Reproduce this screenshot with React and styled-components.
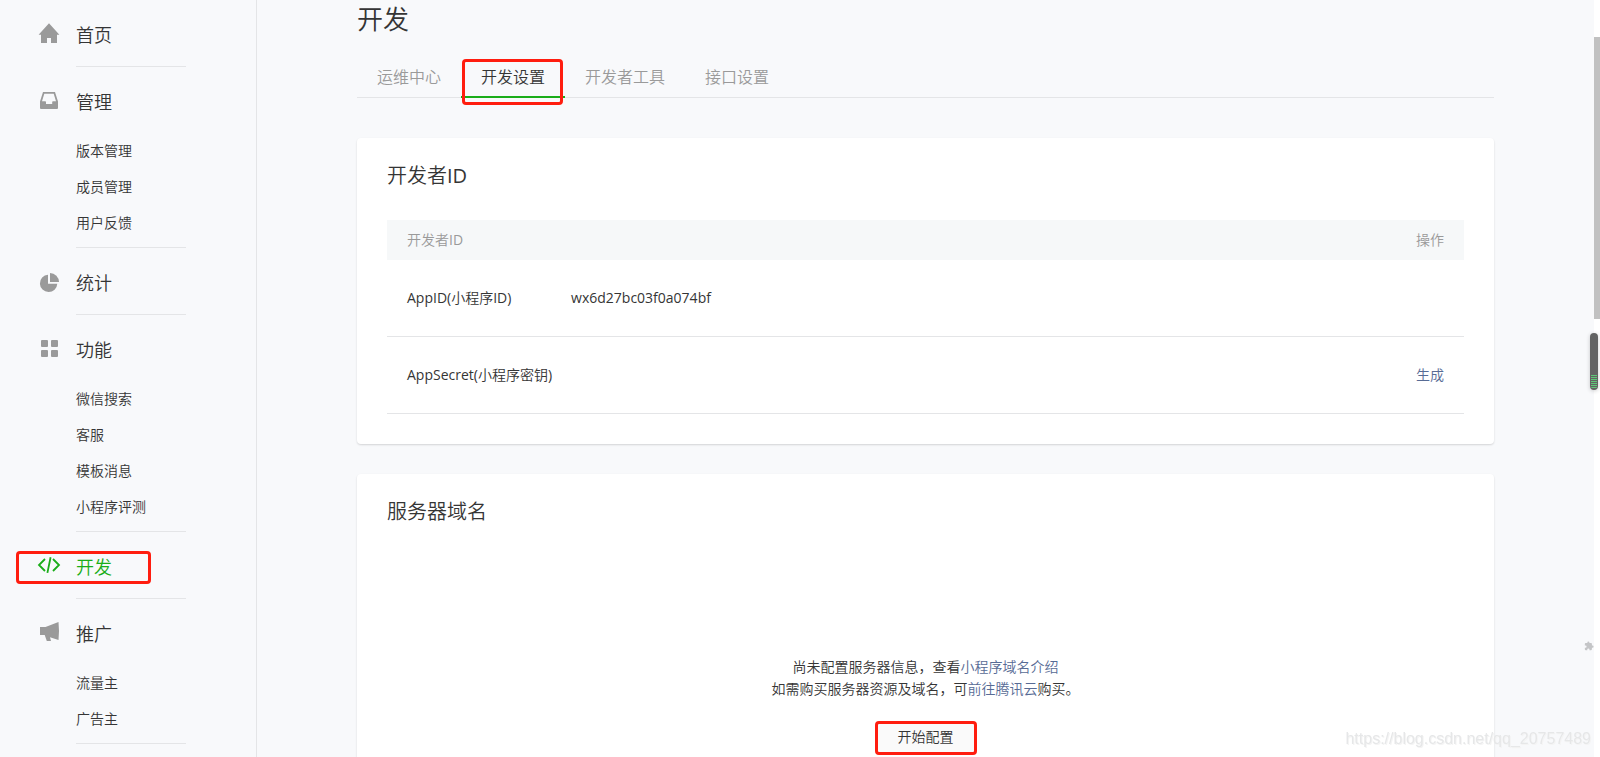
import React, {useState} from 'react';
import styled, {createGlobalStyle} from 'styled-components';

const menus = [
  {name: '首页', icon: 'home', children: []},
  {name: '管理', icon: 'manage', children: ['版本管理', '成员管理', '用户反馈']},
  {name: '统计', icon: 'stats', children: []},
  {name: '功能', icon: 'feature', children: ['微信搜索', '客服', '模板消息', '小程序评测']},
  {name: '开发', icon: 'dev', children: [], active: true},
  {name: '推广', icon: 'promote', children: ['流量主', '广告主']},
]

const tabs = ['运维中心', '开发设置', '开发者工具', '接口设置']

const icons = {
  home: <path d="M12 2.2L1.6 13.8H4V22h6v-5h4v5h6v-8.200h2.400z" />,
  manage: <path fillRule="evenodd" d="M6 4h12l3 9.500V20a1 1 0 0 1-1 1H4a1 1 0 0 1-1-1v-6.500zM7.300 5.800L5 13.300h3.200c.5 0 .8.4.8.8V16h6.200v-1.900c0-.4.3-.8.8-.8h3L16.700 5.800z" />,
  stats: (
    <>
      <path d="M11 5.700V14.800h9.300A8.700 8.700 0 1 1 11 5.700z" />
      <path d="M13 4a9 9 0 0 1 9 9h-9z" />
    </>
  ),
  feature: (
    <>
      <rect x="4" y="4" width="7" height="7" rx="1" />
      <rect x="14" y="4" width="7" height="7" rx="1" />
      <rect x="4" y="14" width="7" height="7" rx="1" />
      <rect x="14" y="14" width="7" height="7" rx="1" />
    </>
  ),
  dev: <path fill="none" stroke="currentColor" strokeWidth="1.8" d="M8 6l-6 6 6 6M16 6l6 6-6 6M13.600 4.300L10.400 19.900" />,
  promote: <path d="M3 7h5.500L21.500 2q1 9 0 18l-8.500-2.700 1 3.700H9.800L7.700 15H3z" />,
}

const App = () => {
  const [current, setCurrent] = useState('开发设置'); //選択中のタブ

  return (
    <>
      <GlobalStyle />
      <Page>
        <Sidebar>
          {menus.map(menu => (
            <Section key={menu.name} $hasChildren={menu.children.length > 0}>
              <MenuHead href="#" $active={menu.active}>
                <MenuIcon viewBox="0 0 24 24" aria-hidden="true">{icons[menu.icon]}</MenuIcon>
                {menu.name}
                {menu.active && <MenuMark />}
              </MenuHead>
              {menu.children.map(child => (
                <SubLink href="#" key={child}>{child}</SubLink>
              ))}
            </Section>
          ))}
        </Sidebar>
        <Main>
          <Title>开发</Title>
          <Tabs>
            {tabs.map(tab => (
              <Tab key={tab} $active={tab === current} onClick={() => setCurrent(tab)}>
                {tab}
                {tab === current && <TabMark />}
              </Tab>
            ))}
          </Tabs>
          <Card>
            <CardTitle>开发者<Latin>ID</Latin></CardTitle>
            <Table>
              <thead>
                <tr>
                  <Th scope="col">开发者<Latin>ID</Latin></Th>
                  <Th />
                  <Th scope="col" $right>操作</Th>
                </tr>
              </thead>
              <tbody>
                <tr>
                  <Td><Latin>AppID(</Latin>小程序<Latin>ID)</Latin></Td>
                  <Td><Latin>wx6d27bc03f0a074bf</Latin></Td>
                  <Td />
                </tr>
                <tr>
                  <Td><Latin>AppSecret(</Latin>小程序密钥<Latin>)</Latin></Td>
                  <Td />
                  <Td $right><Link href="#">生成</Link></Td>
                </tr>
              </tbody>
            </Table>
          </Card>
          <Card>
            <CardTitle>服务器域名</CardTitle>
            <Empty>
              <Tip>尚未配置服务器信息，查看<Link href="#">小程序域名介绍</Link></Tip>
              <Tip>如需购买服务器资源及域名，可<Link href="#">前往腾讯云</Link>购买。</Tip>
              <ConfigButton>开始配置<ButtonMark /></ConfigButton>
            </Empty>
          </Card>
        </Main>
        <ScrollTrack><ScrollThumb /></ScrollTrack>
      </Page>
      <Meter><MeterLevel /></Meter>
      <Puzzle viewBox="0 0 24 24" aria-hidden="true">
        <path d="M20.500 11H19V7a2 2 0 0 0-2-2h-4V3.500a2.500 2.500 0 0 0-5 0V5H4a2 2 0 0 0-2 2v3.800h1.500a2.700 2.700 0 0 1 0 5.400H2V20a2 2 0 0 0 2 2h3.800v-1.500a2.700 2.700 0 0 1 5.400 0V22H17a2 2 0 0 0 2-2v-4h1.500a2.500 2.500 0 0 0 0-5z" />
      </Puzzle>
      <Watermark>https://blog.csdn.net/qq_20757489</Watermark>
    </>
  )
}

export default App

const GlobalStyle = createGlobalStyle`
  * {
    box-sizing: border-box;
  }
  body {
    margin: 0;
    background: #f8f9fb;
    color: #353535;
    font-family: "Open Sans", "Noto Sans CJK SC", sans-serif;
    font-size: 14px;
    font-weight: 350;
  }
  a {
    text-decoration: none;
  }
`

const Latin = styled.span`
  font-weight: 400;
`

const Page = styled.div`
  display: flex;
  height: 100vh;
  overflow: hidden;
`

const Sidebar = styled.nav`
  flex: none;
  width: 257px;
  border-right: 1px solid #e4e5e7;
`

const Section = styled.div`
  &::after {
    content: '';
    display: block;
    width: 110px;
    height: 1px;
    margin: ${props => props.$hasChildren ? '6px' : '0'} 0 0 76px;
    background: #e4e5e7;
  }
`

const MenuHead = styled.a`
  position: relative;
  display: flex;
  gap: 15px;
  height: 66px;
  padding: 20px 0 16px 37px;
  color: ${props => props.$active ? '#1aad19' : '#353535'};
  font-size: 18px;
  line-height: 30px;

  svg {
    color: ${props => props.$active ? '#1aad19' : '#9a9a9a'};
  }
`

const MenuIcon = styled.svg`
  flex: none;
  width: 24px;
  height: 24px;
  margin-top: 1px;
  fill: currentColor;
`

const SubLink = styled.a`
  display: block;
  padding-left: 76px;
  color: #353535;
  line-height: 36px;
`

const RedMark = styled.span`
  position: absolute;
  border: 3px solid #ff1d0f;
  border-radius: 4px;
  pointer-events: none;
`

const MenuMark = styled(RedMark)`
  top: 19px;
  left: 16px;
  width: 135px;
  height: 33px;
`

const Main = styled.main`
  flex: 1;
  min-width: 0;
  padding: 0 100px;
`

const Title = styled.h1`
  margin: 0;
  font-size: 26px;
  font-weight: 350;
  line-height: 38px;
`

const Tabs = styled.div`
  display: flex;
  margin: 18px 0 40px;
  border-bottom: 1px solid #e4e5e7;
`

const Tab = styled.button`
  position: relative;
  height: 42px;
  margin-bottom: -1px;
  padding: 0 20px;
  border: 0;
  border-bottom: 2px solid ${props => props.$active ? '#1aad19' : 'transparent'};
  background: none;
  color: ${props => props.$active ? '#353535' : '#9a9a9a'};
  font: inherit;
  font-size: 16px;
`

const TabMark = styled(RedMark)`
  top: 3px;
  left: 1px;
  width: 101px;
  height: 46px;
`

const Card = styled.section`
  margin-bottom: 30px;
  padding: 21px 30px 30px;
  border-radius: 4px;
  background: #ffffff;
  box-shadow: 0 1px 2px rgba(0, 0, 0, 0.15);
`

const CardTitle = styled.h2`
  margin: 0 0 27px;
  font-size: 20px;
  font-weight: 350;
  line-height: 34px;
`

const Table = styled.table`
  width: 100%;
  border-spacing: 0;
  table-layout: fixed;
`

const Th = styled.th`
  height: 40px;
  padding: 0 20px 2px;
  background: #f6f8f9;
  color: #9a9a9a;
  font-weight: 350;
  text-align: ${props => props.$right ? 'right' : 'left'};

  &:first-child {
    width: 17%;
    padding-right: 0;
  }
`

const Td = styled.td`
  height: 77px;
  padding: 0 20px 2px;
  border-bottom: 1px solid #e4e5e7;
  text-align: ${props => props.$right ? 'right' : 'left'};
  white-space: nowrap;

  &:first-child {
    padding-right: 0;
  }
  &:nth-child(2) {
    padding-left: 1px;
  }
`

const Link = styled.a`
  color: #576b95;
`

const Empty = styled.div`
  display: flex;
  flex-direction: column;
  align-items: center;
  padding: 100px 0;
`

const Tip = styled.p`
  margin: 0;
  line-height: 22px;
`

const ConfigButton = styled.button`
  position: relative;
  width: 100px;
  height: 32px;
  margin-top: 22px;
  padding: 0 0 4px;
  border: 1px solid #e4e5e7;
  border-radius: 3px;
  background: #fafafa;
  color: #353535;
  font: inherit;
`

const ButtonMark = styled(RedMark)`
  inset: -2px;
`

const ScrollTrack = styled.div`
  flex: none;
  width: 6px;
  padding-top: 37px;
  background: #ffffff;
`

const ScrollThumb = styled.div`
  height: 282px;
  background: #c1c1c1;
`

const Meter = styled.div`
  position: fixed;
  top: 333px;
  right: 2px;
  display: flex;
  align-items: flex-end;
  width: 8px;
  height: 57px;
  padding: 1px;
  border-radius: 4px;
  background: #636363;
  box-shadow: 0 1px 4px rgba(0, 0, 0, 0.2);
`

const MeterLevel = styled.div`
  width: 100%;
  height: 14px;
  border-radius: 0 0 3px 3px;
  background: repeating-linear-gradient(#5fc777 0 1px, #636363 1px 2px);
`

const Puzzle = styled.svg`
  position: fixed;
  top: 641px;
  right: 6px;
  width: 10px;
  height: 10px;
  fill: #c4c5c7;
`

const Watermark = styled.div`
  position: fixed;
  right: 9px;
  bottom: 8px;
  color: #e6e7e8;
  font-family: "Liberation Sans", sans-serif;
  font-size: 16px;
  font-weight: 400;
  line-height: 20px;
  text-shadow: 1px 1px 0 #f4f4f4;
`
